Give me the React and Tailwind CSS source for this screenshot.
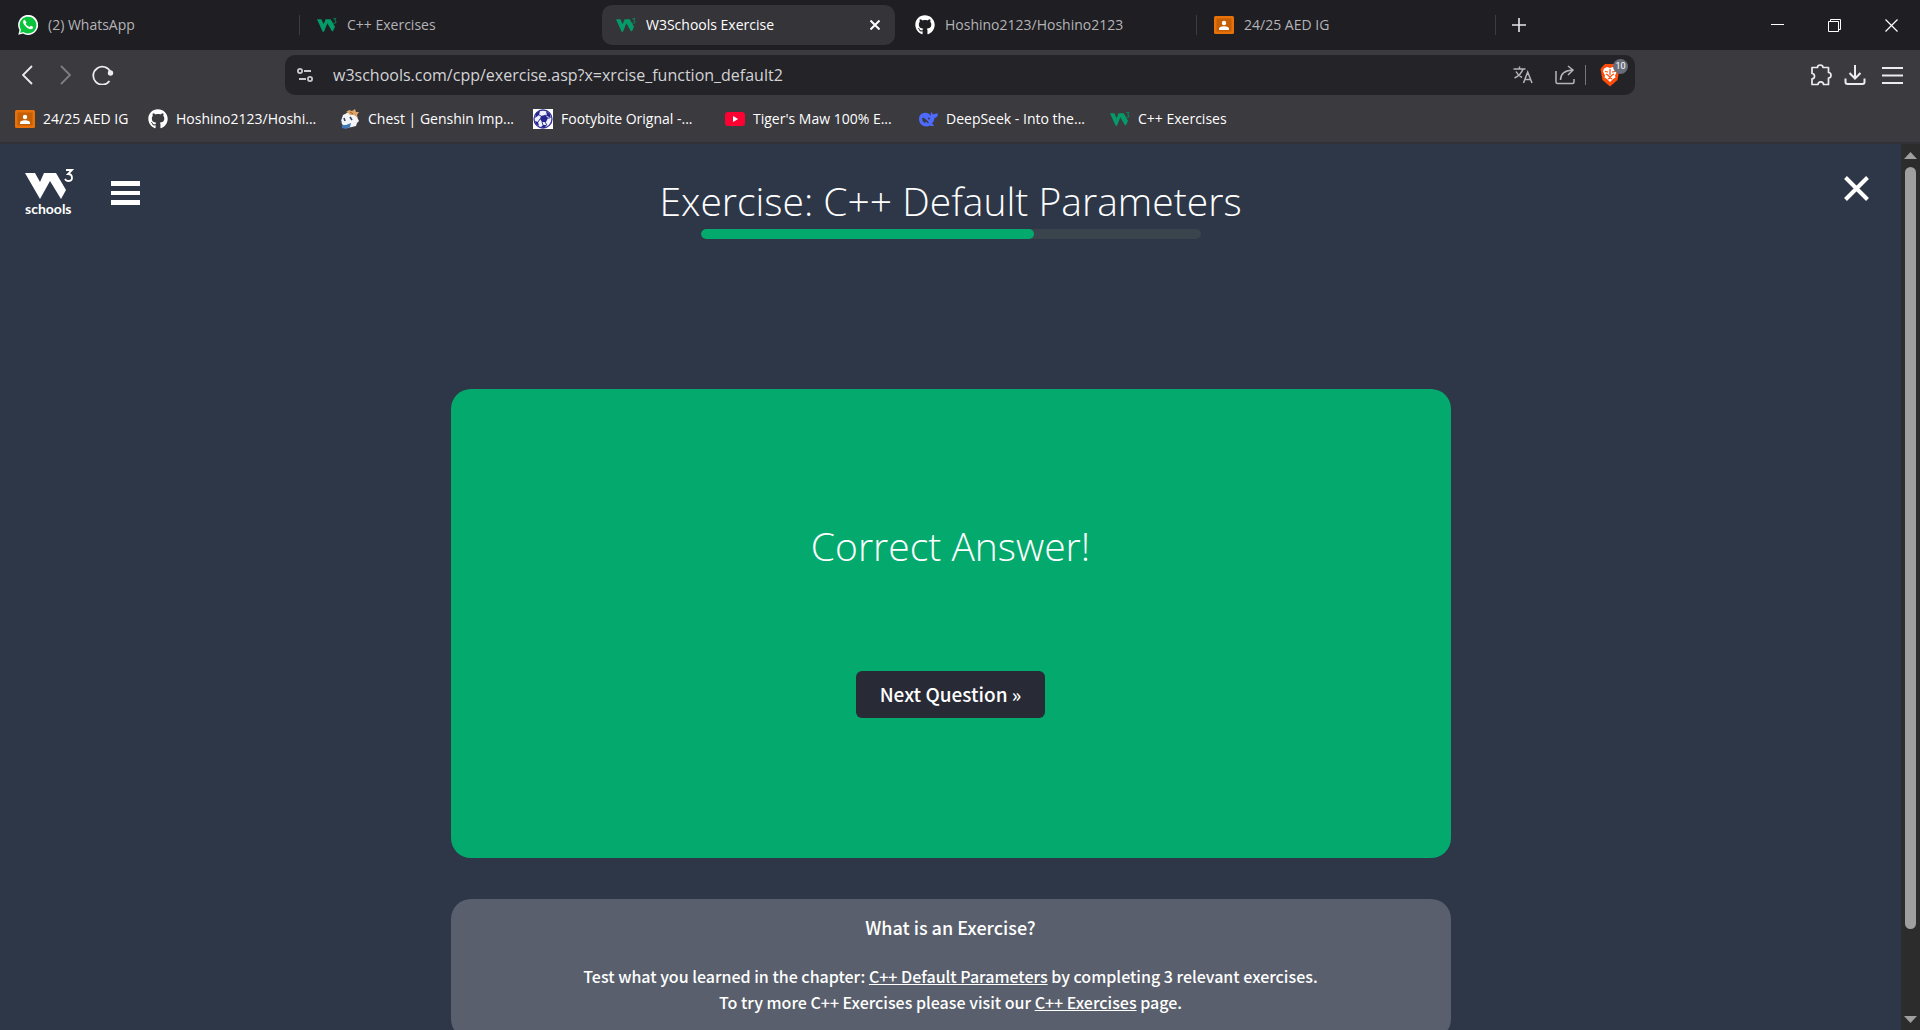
import React from "react";
import { FaGithub } from "react-icons/fa";

function W3Mark({ className }) {
  return (
    <svg viewBox="0 0 60 42" className={className} fill="currentColor" aria-hidden="true">
      <path d="M0 4h13l7 15 6-15h15l13 22-6 14h-3L31 16 21 41h-4z" />
      <path d="M49 2h8l-4 5q4 1 4 5t-5 4q-3 0-4-2" fill="none" stroke="currentColor" strokeWidth="2.4" />
    </svg>
  );
}

function W3Icon() {
  return <W3Mark className="h-3.5 w-5 text-[#059b68]" />;
}

function WhatsAppIcon() {
  return (
    <svg viewBox="0 0 20 20" className="size-5" aria-hidden="true">
      <path d="M0.3 19.8 1.5 15A10 10 0 1 1 5 18.5z" fill="#fff" />
      <path d="M2.1 18 3 14.7A8.4 8.4 0 1 1 5.4 17.1z" fill="#09c33c" />
      <path
        d="M7 5.2c-.3-.6-.9-.5-1.3 0-1.3 1.5-.4 3.8 1.5 5.8 2.1 2.2 5.2 4.1 7.2 2.7.7-.5.9-1.3.7-1.7-.2-.3-1.8-1.1-2.2-1.2-.5-.1-.9 1.2-1.4 1.2-.9 0-3.5-2.1-3.8-3.2 0-.5.8-.9.8-1.4C8.4 7 7.3 5.7 7 5.2z"
        fill="#fff"
      />
    </svg>
  );
}

function GitHubIcon() {
  return <FaGithub className="size-5 text-white" aria-hidden="true" />;
}

function ClassroomIcon() {
  return (
    <svg viewBox="0 0 20 18" className="h-[18px] w-5" aria-hidden="true">
      <rect width="20" height="18" rx="1.5" fill="#e8710a" />
      <rect x="2.5" y="2.5" width="15" height="13" fill="#c45f05" />
      <circle cx="10" cy="7" r="2.2" fill="#fff" />
      <path d="M5 14v-1q0-2.8 5-2.8t5 2.8v1z" fill="#fff" />
    </svg>
  );
}

function GenshinIcon() {
  return (
    <svg viewBox="0 0 20 20" className="size-5" aria-hidden="true">
      <path d="M1 12 3 6l4-2 6-1 3 3 3 6-2 2-1 3-4 1-6 1-4-4z" fill="#f3f5f8" />
      <path d="m6 3 3-2 3 1 3-2 1 3 3 0-2 3 1 3-4-3-4 0-2-2z" fill="#dca468" />
      <path d="m2 16 4 0 5-2-1 4-4 2-4-1z" fill="#3f78b5" />
      <path d="m4 9 1 3m5-4 2 3M1 12l-1 3" stroke="#35445e" strokeWidth="1.6" />
      <path d="m10 3 3 2" stroke="#8f5a30" />
    </svg>
  );
}

function FootballIcon() {
  return (
    <svg viewBox="0 0 20 20" className="size-5" aria-hidden="true">
      <rect width="20" height="20" fill="#fff" />
      <circle cx="10" cy="10" r="9" fill="#eef0fb" stroke="#34349a" strokeWidth="1.3" />
      <path d="m8 7 4-1 3 3-2 4H9L7 10z" fill="#26268f" />
      <path d="m3 4 4-2-1 4-4 3zm10-2 4 3 1 4-4-2zM2 12l3 1 1 4-3-2zm8 4h4l-3 3-3-1z" fill="#26268f" />
      <path d="M6 6l2 1m6 0-2-1m-5 4-2 3m4 0 1 3m4-7h3m-5 4 2 3" stroke="#34349a" />
    </svg>
  );
}

function YouTubeIcon() {
  return (
    <svg viewBox="0 0 20 14" className="h-3.5 w-5" aria-hidden="true">
      <rect width="20" height="14" rx="3" fill="#ff0033" />
      <path d="m8 4 5.2 3L8 10z" fill="#fff" />
    </svg>
  );
}

function DeepSeekIcon() {
  return (
    <svg viewBox="0 0 20 16" className="h-4 w-5" aria-hidden="true">
      <path
        d="M1 8Q1 3 5.5 2q3-.5 5 .5L13 5Q12 2 13.5 1q.5 2 2.5 2.5Q17 2 20 2.5q-.3 4-3.5 4.500-.3 3-2.500 5.500l2 2q-2 1-4 0Q9 16 5.5 15 1 13 1 8z"
        fill="#4d6bfe"
      />
      <path d="M4 7q1-.5 2 0 4 2.5 5 5.5-2-.5-3-2-.5 1-1.5 1.5Q4 10.5 4 7z" fill="#3b3a3f" />
      <circle cx="11" cy="7.5" r="1" fill="#3b3a3f" />
    </svg>
  );
}

const tabs = [
  { title: "(2) WhatsApp", Icon: WhatsAppIcon },
  { title: "C++ Exercises", Icon: W3Icon, divided: true },
  { title: "W3Schools Exercise", Icon: W3Icon, active: true },
  { title: "Hoshino2123/Hoshino2123", Icon: GitHubIcon },
  { title: "24/25 AED IG", Icon: ClassroomIcon, divided: true },
];

const bookmarks = [
  { title: "24/25 AED IG", Icon: ClassroomIcon, width: "w-[133px]" },
  { title: "Hoshino2123/Hoshi...", Icon: GitHubIcon, width: "w-48" },
  { title: "Chest | Genshin Imp...", Icon: GenshinIcon, width: "w-[193px]" },
  { title: "Footybite Orignal -...", Icon: FootballIcon, width: "w-48" },
  { title: "Tiger's Maw 100% E...", Icon: YouTubeIcon, width: "w-[193px]" },
  { title: "DeepSeek - Into the...", Icon: DeepSeekIcon, width: "w-48" },
  { title: "C++ Exercises", Icon: W3Icon, width: "w-48" },
];

function TabStrip() {
  return (
    <header className="flex h-[50px] items-center bg-[#1f1e23]">
      <nav aria-label="Tabs" className="flex min-w-0 flex-1 items-center gap-1.5 pl-1">
        {tabs.map(({ title, Icon, active, divided }) => (
          <div
            key={title}
            className={
              active
                ? "relative flex h-10 w-[293px] items-center rounded-[10px] bg-[#353439] text-white"
                : "relative flex h-10 w-[293px] items-center text-[#b4b4b7]"
            }
          >
            {divided && <span className="absolute top-2.5 -left-1 h-5 w-px bg-[#3d3c41]" />}
            <button type="button" className="flex min-w-0 flex-1 items-center gap-2.5 pl-3.5 text-left">
              <span className="flex w-5 justify-center">
                <Icon />
              </span>
              <span className="truncate">{title}</span>
            </button>
            {active && (
              <button type="button" aria-label="Close tab" className="mr-[15px] text-white">
                <svg viewBox="0 0 10 10" className="size-2.5" stroke="currentColor" strokeWidth="2">
                  <path d="m0.5 0.5 9 9m0-9-9 9" />
                </svg>
              </button>
            )}
          </div>
        ))}
        <span className="-ml-1 h-5 w-px bg-[#3d3c41]" />
        <button type="button" aria-label="New tab" className="ml-2.5 text-[#e6e6e8]">
          <svg viewBox="0 0 14 14" className="size-3.5" stroke="currentColor" strokeWidth="1.6">
            <path d="M7 0v14M0 7h14" />
          </svg>
        </button>
      </nav>
      <div className="flex text-white">
        <button type="button" aria-label="Minimize" className="flex h-12 w-[57px] items-center justify-center">
          <svg viewBox="0 0 13 13" className="size-[13px]" stroke="currentColor">
            <path d="M0 5.5h13" />
          </svg>
        </button>
        <button type="button" aria-label="Restore" className="flex h-12 w-[57px] items-center justify-center">
          <svg viewBox="0 0 13 13" className="size-[13px]" stroke="currentColor" fill="none">
            <path d="M0.5 2.5h10v10h-10zM2.5 2.5v-2h10v10h-2" />
          </svg>
        </button>
        <button type="button" aria-label="Close window" className="flex h-12 w-[57px] items-center justify-center">
          <svg viewBox="0 0 13 13" className="size-[13px]" stroke="currentColor" strokeWidth="1.2">
            <path d="m0.5 0.5 12 12m0-12-12 12" />
          </svg>
        </button>
      </div>
    </header>
  );
}

function Toolbar() {
  return (
    <div className="flex h-[50px] items-center text-[#ececee]">
      <div className="flex w-[285px] items-center pl-[22px]">
        <button type="button" aria-label="Back">
          <svg viewBox="0 0 11 20" className="h-5 w-[11px]" fill="none" stroke="currentColor" strokeWidth="1.8">
            <path d="m10 1-9 9 9 9" />
          </svg>
        </button>
        <button type="button" aria-label="Forward" className="ml-[27px] text-[#7f7e84]">
          <svg viewBox="0 0 11 20" className="h-5 w-[11px]" fill="none" stroke="currentColor" strokeWidth="1.8">
            <path d="m1 1 9 9-9 9" />
          </svg>
        </button>
        <button type="button" aria-label="Reload" className="ml-[21px]">
          <svg viewBox="0 0 22 20" className="h-5 w-[22px]" fill="none" stroke="currentColor" strokeWidth="1.8">
            <path d="M18.5 7A9 9 0 1 0 17.5 16" />
            <circle cx="18.5" cy="8" r="2.7" fill="currentColor" stroke="none" />
          </svg>
        </button>
      </div>
      <div className="flex h-10 flex-1 items-center rounded-[10px] bg-[#242328] pl-3 pr-[7px]">
        <button type="button" aria-label="Site settings" className="text-[#c9c9cc]">
          <svg viewBox="0 0 16 14" className="h-3.5 w-4" fill="none" stroke="currentColor" strokeWidth="1.8">
            <circle cx="3" cy="3" r="2.1" />
            <path d="M7 3h7M2 11h7" />
            <circle cx="13" cy="11" r="2.1" />
          </svg>
        </button>
        <input
          type="text"
          aria-label="Address"
          defaultValue="w3schools.com/cpp/exercise.asp?x=xrcise_function_default2"
          className="ml-5 min-w-0 flex-1 bg-transparent text-base text-[#d3d3d6] outline-none"
        />
        <button type="button" aria-label="Translate" className="text-[#b5b5b8]">
          <svg viewBox="0 0 20 18" className="h-[18px] w-5" fill="none" stroke="currentColor" strokeWidth="1.5">
            <path d="M0.5 3h12M6.5 0.5V3M10 3q-2 6-8.5 9M3 5.5q2 4 6 6M10.5 17l4.2-11 4.3 11M12 13.5h5.5" />
          </svg>
        </button>
        <button type="button" aria-label="Share" className="ml-[22px] text-[#b5b5b8]">
          <svg viewBox="0 0 20 20" className="size-5" fill="none" stroke="currentColor" strokeWidth="1.5">
            <path d="M1 6v11q0 1.5 1.5 1.5h15q1.5 0 1.5-1.5v-3M5.5 15Q5.5 6 17 5M13 1l5 4-5 5" />
          </svg>
        </button>
        <span className="ml-2.5 h-5 w-px bg-[#77767c]" />
        <button type="button" aria-label="Brave Shields" className="relative ml-3.5 h-6 w-7">
          <svg viewBox="0 0 20 24" className="h-6 w-5" aria-hidden="true">
            <path d="M5 1h10l2.5 2.5L19.5 6l-2 11L10 23.5 2.5 17 .5 6l2-2.5z" fill="#fb4c0a" />
            <path
              d="M4 5.5 7 4l3 1 3-1 3 1.5 1 3-2 4 .5 2L13 16l-3 3-3-3-2.5-1.5.5-2-2-4z"
              fill="#fff"
            />
            <path
              d="M5 8.5 8 9m7-.5L12 9m-2-3v6m-2.5 0 2.5 2 2.5-2M6 11l2 1m6-1-2 1m-4 4 2-1 2 1"
              stroke="#fb4c0a"
              strokeWidth="1.2"
              fill="none"
            />
          </svg>
          <span className="absolute -top-1 right-0 flex size-[15px] items-center justify-center rounded-full bg-[#686c79] font-['Roboto'] text-[9px] text-white">
            10
          </span>
        </button>
      </div>
      <div className="flex w-[285px] items-center justify-end pr-[17px]">
        <button type="button" aria-label="Extensions">
          <svg viewBox="0 0 22 22" className="size-[22px]" fill="none" stroke="currentColor" strokeWidth="1.7" strokeLinejoin="round">
            <path d="M2 3.5h5.5q0-2.5 2.7-2.5t2.8 2.5h5.5v5q2.5 0 2.5 2.7T18.5 14v6.5h-5q0-2.7-2.7-2.7T8 20.5H2v-5.7q2.5 0 2.5-2.6T2 9.5z" />
          </svg>
        </button>
        <button type="button" aria-label="Downloads" className="ml-3">
          <svg viewBox="0 0 22 20" className="h-5 w-[22px]" fill="none" stroke="currentColor" strokeWidth="2">
            <path d="M11 0v13M5.5 8l5.5 5.5L16.5 8M1.5 13.5V17q0 2 2 2h15q2 0 2-2v-3.5" />
          </svg>
        </button>
        <button type="button" aria-label="Menu" className="ml-4">
          <svg viewBox="0 0 21 17" className="h-[17px] w-[21px]" stroke="currentColor" strokeWidth="2">
            <path d="M0 1h21M0 8.5h21M0 16h21" />
          </svg>
        </button>
      </div>
    </div>
  );
}

function BookmarkBar() {
  return (
    <nav aria-label="Bookmarks" className="flex h-[42px] items-start pl-[15px] pt-[9px] text-white">
      {bookmarks.map(({ title, Icon, width }) => (
        <a key={title} href="#" className={`flex items-center gap-2 ${width}`}>
          <span className="flex w-5 shrink-0 justify-center">
            <Icon />
          </span>
          <span className="whitespace-nowrap">{title}</span>
        </a>
      ))}
    </nav>
  );
}

function ExercisePage() {
  return (
    <div className="relative flex-1 overflow-hidden bg-[#2e3748] px-6 text-white">
      <div className="absolute left-[25px] top-[25px] flex gap-9">
        <a href="#" aria-label="W3Schools home">
          <svg viewBox="0 0 50 52" className="h-[52px] w-[50px]" fill="currentColor">
            <path d="M0 4h10l5 9 4-9h12l10 17-5 9L25 12 15 30z" />
            <path d="M41 1h6l-4 4q4 0 4 4 0 3-4 3-2 0-3-2" fill="none" stroke="currentColor" strokeWidth="1.8" />
            <text x="0" y="45" fontFamily="Lato, sans-serif" fontWeight="700" fontSize="14">
              schools
            </text>
          </svg>
        </a>
        <button type="button" aria-label="Open menu" className="flex h-9 flex-col gap-[5px] pt-3">
          <span className="h-[5px] w-[29px] bg-white" />
          <span className="h-1 w-[29px] bg-white" />
          <span className="h-[5px] w-[29px] bg-white" />
        </button>
      </div>
      <button type="button" aria-label="Close exercise" className="absolute right-8 top-8">
        <svg viewBox="0 0 25 25" className="size-[25px]" stroke="currentColor" strokeWidth="4">
          <path d="m1.5 1.5 22 22m0-22-22 22" />
        </svg>
      </button>

      <main className="mx-auto flex max-w-[1000px] flex-col items-center">
        <h1 className="pt-7 text-[39px] leading-[57px] font-light">Exercise: C++ Default Parameters</h1>
        <div
          role="progressbar"
          aria-label="Exercise progress"
          aria-valuenow={2}
          aria-valuemin={0}
          aria-valuemax={3}
          className="h-2.5 w-1/2 overflow-hidden rounded-full bg-[#39444d]"
        >
          <div className="h-full w-2/3 rounded-full bg-[#04aa6d]" />
        </div>

        <section className="mt-[150px] flex h-[469px] w-full flex-col items-center rounded-[20px] bg-[#04aa6d]">
          <h2 className="pt-32 text-[39px] leading-[57px] font-light">Correct Answer!</h2>
          <button
            type="button"
            className="mt-[97px] h-[47px] rounded-md bg-[#282a35] px-6 pb-0.5 font-['Noto_Sans_CJK_SC'] text-[19px] font-medium"
          >
            Next Question »
          </button>
        </section>

        <section className="mt-[41px] flex h-[140px] w-full flex-col items-center rounded-[20px] bg-[#595f6c] pt-[15px] text-center font-['Noto_Sans_CJK_SC'] text-base leading-[26px] font-medium">
          <h3 className="text-lg leading-[26px] font-medium">What is an Exercise?</h3>
          <p className="mt-[23px]">
            Test what you learned in the chapter:{" "}
            <a href="#" className="underline">
              C++ Default Parameters
            </a>{" "}
            by completing 3 relevant exercises.
          </p>
          <p>
            To try more C++ Exercises please visit our{" "}
            <a href="#" className="underline">
              C++ Exercises
            </a>{" "}
            page.
          </p>
        </section>
      </main>
    </div>
  );
}

function ScrollBar() {
  return (
    <div className="flex w-[19px] flex-col items-center bg-[#2c2c2c] text-[#9f9f9f]">
      <svg viewBox="0 0 13 7" className="mt-2 h-[7px] w-[13px]" fill="currentColor" aria-hidden="true">
        <path d="M6.5 0 13 7H0z" />
      </svg>
      <div className="mt-2 mb-[87px] w-[11px] flex-1 rounded-full bg-[#9f9f9f]" />
      <svg viewBox="0 0 13 7" className="mb-[7px] h-[7px] w-[13px]" fill="currentColor" aria-hidden="true">
        <path d="M6.5 7 0 0h13z" />
      </svg>
    </div>
  );
}

export default function App() {
  return (
    <div className="flex h-screen flex-col overflow-hidden bg-[#2e3748] font-['Open_Sans',sans-serif] text-sm font-normal">
      <TabStrip />
      <div className="border-b-2 border-[#323137] bg-[#3b3a3f]">
        <Toolbar />
        <BookmarkBar />
      </div>
      <div className="flex min-h-0 flex-1">
        <ExercisePage />
        <ScrollBar />
      </div>
    </div>
  );
}
